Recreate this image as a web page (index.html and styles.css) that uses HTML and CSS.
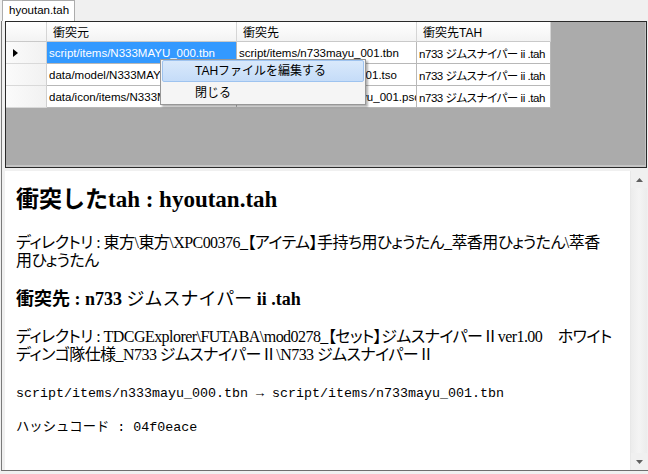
FILE: index.html
```html
<!DOCTYPE html>
<html lang="ja">
<head>
<meta charset="utf-8">
<title>hyoutan.tah</title>
<link rel="stylesheet" href="styles.css">
</head>
<body>
<div class="window">
  <div class="tabstrip">
    <div class="tab">hyoutan.tah</div>
  </div>
  <div class="tabpage">
    <div class="gridbox">
      <table class="grid">
        <colgroup>
          <col class="c-head">
          <col class="c-src">
          <col class="c-dst">
          <col class="c-tah">
        </colgroup>
        <thead>
          <tr>
            <th class="corner"></th>
            <th>衝突元</th>
            <th>衝突先</th>
            <th>衝突先TAH</th>
          </tr>
        </thead>
        <tbody>
          <tr>
            <td class="rowhead"><span class="current"></span></td>
            <td class="sel">script/items/N333MAYU_000.tbn</td>
            <td>script/items/n733mayu_001.tbn</td>
            <td class="tah">n733 ジムスナイパー ii .tah</td>
          </tr>
          <tr>
            <td class="rowhead"></td>
            <td>data/model/N333MAYU_000.tso</td>
            <td>data/model/n733mayu_001.tso</td>
            <td class="tah">n733 ジムスナイパー ii .tah</td>
          </tr>
          <tr>
            <td class="rowhead"></td>
            <td>data/icon/items/N333MAYU_000.psd</td>
            <td>data/icon/items/n733mayu_001.psd</td>
            <td class="tah">n733 ジムスナイパー ii .tah</td>
          </tr>
        </tbody>
      </table>
    </div>
    <div class="splitter"></div>
    <div class="viewer">
      <div class="doc">
        <h1>衝突したtah : hyoutan.tah</h1>
        <p class="dir">ディレクトリ : 東方\東方\XPC00376_【アイテム】手持ち用ひょうたん_萃香用ひょうたん\萃香用ひょうたん</p>
        <h2>衝突先 : n733 <span class="thin">ジムスナイパー</span> ii .tah</h2>
        <p class="dir">ディレクトリ : TDCGExplorer\FUTABA\mod0278_【セット】ジムスナイパーⅡver1.00　ホワイトディンゴ隊仕様_N733 ジムスナイパーⅡ\N733 ジムスナイパーⅡ</p>
        <p class="mono">script/items/n333mayu_000.tbn → script/items/n733mayu_001.tbn</p>
        <p class="mono">ハッシュコード : 04f0eace</p>
      </div>
      <div class="vscroll">
        <div class="arrow">
          <svg width="7" height="4" viewBox="0 0 7 4"><path d="M0 4 L3.5 0 L7 4 Z" fill="#606060"/></svg>
        </div>
        <div class="track"></div>
        <div class="arrow">
          <svg width="7" height="4" viewBox="0 0 7 4"><path d="M0 0 L3.5 4 L7 0 Z" fill="#606060"/></svg>
        </div>
      </div>
    </div>
  </div>
  <div class="menu">
    <div class="menu-item hot">TAHファイルを編集する</div>
    <div class="menu-item">閉じる</div>
  </div>
</div>
</body>
</html>
```
FILE: styles.css
```css
* {
  box-sizing: border-box;
}

html, body {
  margin: 0;
  padding: 0;
}

body {
  width: 648px;
  height: 474px;
  overflow: hidden;
  background: #f0f0f0;
  color: #000;
  font-family: "Liberation Sans", "Noto Sans CJK JP", sans-serif;
  font-size: 12px;
}

.window {
  position: relative;
  display: flex;
  flex-direction: column;
  height: 474px;
}

/* tab strip */
.tabstrip {
  height: 21px;
  display: flex;
  align-items: flex-end;
  padding-left: 2px;
}

.tab {
  height: 21px;
  padding: 0 5px 0 6px;
  background: #fff;
  border: 1px solid #acacac;
  border-bottom: none;
  font-size: 11.5px;
  line-height: 19px;
}

.tabpage {
  height: 450px;
  margin-left: 1px;
  padding: 0 1px 0 3px;
  border-left: 1px solid #7a7a7a;
  border-bottom: 1px solid #6e6e6e;
  display: flex;
  flex-direction: column;
}

/* data grid */
.gridbox {
  height: 147px;
  border: 1px solid #2a2a2a;
  background: #ababab;
  overflow: hidden;
  box-shadow: inset -3px -4px 0 -2px #c4c4c4;
}

.grid {
  table-layout: fixed;
  border-collapse: separate;
  border-spacing: 0;
  width: 545px;
  font-size: 11.5px;
  font-feature-settings: "palt";
}

.c-head { width: 41px; }
.c-src { width: 190px; }
.c-dst { width: 180px; }
.c-tah { width: 134px; }

.grid th {
  height: 20px;
  padding: 0 0 0 6px;
  text-align: left;
  font-weight: normal;
  font-size: 12px;
  background: linear-gradient(#ffffff, #f3f3f3);
  border-right: 1px solid #d5d5d5;
  border-bottom: 1px solid #c9c9c9;
  white-space: nowrap;
  overflow: hidden;
}

.grid td {
  height: 22px;
  padding: 0 2px;
  background: #fff;
  border-right: 1px solid #b8b8b8;
  border-bottom: 1px solid #b8b8b8;
  white-space: nowrap;
  overflow: hidden;
}

.grid td.tah {
  letter-spacing: -0.45px;
}

.grid td.rowhead {
  padding-left: 7px;
  background: linear-gradient(90deg, #fbfbfb, #f1f1f1);
  border-right-color: #d0d0d0;
  border-bottom-color: #d9d9d9;
}

.grid td.sel {
  background: #3399ff;
  color: #fff;
}

.current {
  display: block;
  width: 0;
  height: 0;
  border-left: 5px solid #000;
  border-top: 4px solid transparent;
  border-bottom: 4px solid transparent;
}

.splitter {
  height: 3px;
  flex: none;
}

/* html viewer */
.viewer {
  flex: 1;
  display: flex;
  background: #fff;
  min-height: 0;
}

.doc {
  flex: 1;
  padding: 15px 15px 0 11px;
  font-family: "Liberation Serif", "Noto Sans CJK JP", serif;
  font-size: 16px;
  overflow: hidden;
}

.doc h1 {
  margin: 0 0 21px;
  font-size: 23px;
  line-height: 27px;
  font-weight: bold;
}

.doc h2 {
  margin: 0 0 18px;
  font-size: 18px;
  line-height: 22px;
  font-weight: bold;
}

.doc h2 .thin {
  font-weight: normal;
}

.doc .dir {
  margin: 0 0 18px;
  line-height: 18px;
  letter-spacing: -0.55px;
  font-feature-settings: "palt";
}

.doc .mono {
  margin: 0 0 18px;
  font-family: "Liberation Mono", "Noto Sans CJK JP", monospace;
  font-size: 13.33px;
  line-height: 16px;
}

.doc .dir + .mono {
  margin-top: 22px;
}

.vscroll {
  width: 17px;
  flex: none;
  display: flex;
  flex-direction: column;
  background: #f0f0f0;
  border-left: 1px solid #e8e8e8;
}

.vscroll .arrow {
  height: 17px;
  display: flex;
  align-items: center;
  justify-content: center;
}

.vscroll .track {
  flex: 1;
  background: linear-gradient(90deg, #ececec, #f4f4f4 50%, #ececec);
}

/* context menu */
.menu {
  position: absolute;
  left: 160px;
  top: 59px;
  width: 206px;
  padding: 0 1px;
  background: #f5f5f5;
  border: 1px solid #979797;
  box-shadow: 2px 2px 2px rgba(0, 0, 0, 0.3);
}

.menu-item {
  height: 22px;
  padding-left: 32px;
  border: 1px solid transparent;
  border-radius: 2px;
  font-size: 12px;
  line-height: 20px;
}

.menu-item.hot {
  background: linear-gradient(#d9e9fb, #c5dcf8);
  border-color: #9ec3ef;
}
```
